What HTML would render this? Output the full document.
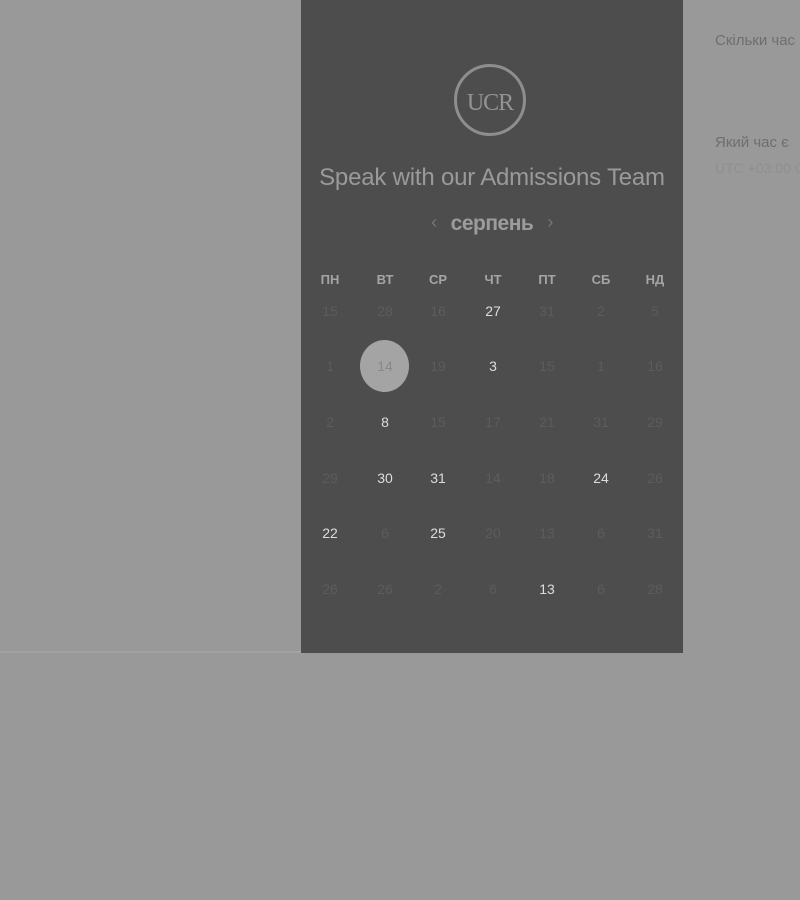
<!DOCTYPE html>
<html><head><meta charset="utf-8"><style>
body{margin:0;width:800px;height:900px;background:#999;position:relative;overflow:hidden;font-family:"Liberation Sans",sans-serif}
.line{position:absolute;left:0;top:651px;width:301px;height:2px;background:#a2a2a2}
.panel{position:absolute;left:301px;top:0;width:382px;height:653px;background:#4d4d4d}
.logo{position:absolute;left:454px;top:64px;width:72px;height:72px;border:3px solid #8e8e8e;border-radius:50%;box-sizing:border-box}
.logo span{position:absolute;left:0;right:0;top:23px;text-align:center;font-family:"Liberation Serif",serif;font-size:24px;color:#939393;letter-spacing:-1px}
.title{position:absolute;left:301px;width:382px;top:164px;text-align:center;font-size:24px;color:#9a9a9a;letter-spacing:-0.2px}
.month{position:absolute;left:301px;width:382px;top:212px;text-align:center;font-size:21px;color:#9c9c9c;font-weight:bold;letter-spacing:-0.5px}
.month i{font-style:normal;font-weight:normal;color:#777;font-size:18px;margin:0 14px;vertical-align:2px}
.c{position:absolute;width:40px;margin-left:-20px;text-align:center;font-size:14px;color:#5c5c5c}
.h{font-weight:bold;color:#a5a5a5;font-size:13px}
.b{color:#ddd}
.sel{position:absolute;left:360px;top:340px;width:49px;height:52px;border-radius:50%;background:#a4a4a4}
.r{position:absolute;left:715px;font-size:15px;color:#6e6e6e;white-space:nowrap}
</style></head><body>
<div class="line"></div>
<div class="panel"></div>
<div class="logo"><span>UCR</span></div>
<div class="title">Speak with our Admissions Team</div>
<div class="month"><i>‹</i>серпень<i>›</i></div>
<div class="sel"></div>
<div id="g"></div>
<div class="r" style="top:32px">Скільки час</div>
<div class="r" style="top:134px">Який час є</div>
<div class="r" style="top:160px;color:#8f8f8f;font-size:14px">UTC +03:00 C</div>
<script>
var xs=[330,385,438,493,547,601,655],ys=[311,366,422,478,533,589];
var hd=["ПН","ВТ","СР","ЧТ","ПТ","СБ","НД"];
var d=[["15","28","16","*27","31","2","5"],["1","14","19","*3","15","1","16"],["2","*8","15","17","21","31","29"],["29","*30","*31","14","18","*24","26"],["*22","6","*25","20","13","6","31"],["26","26","2","6","*13","6","28"]];
var h="";
hd.forEach(function(t,i){h+='<div class="c h" style="left:'+xs[i]+'px;top:272px">'+t+'</div>'});
d.forEach(function(r,j){r.forEach(function(t,i){var b=t[0]=="*";t=t.replace("*","");var st=(j==1&&i==1)?";color:#888":"";h+='<div class="c'+(b?' b':'')+'" style="left:'+xs[i]+'px;top:'+(ys[j]-8)+'px'+st+'">'+t+'</div>'})});
document.getElementById("g").innerHTML=h;
</script>
</body></html>
